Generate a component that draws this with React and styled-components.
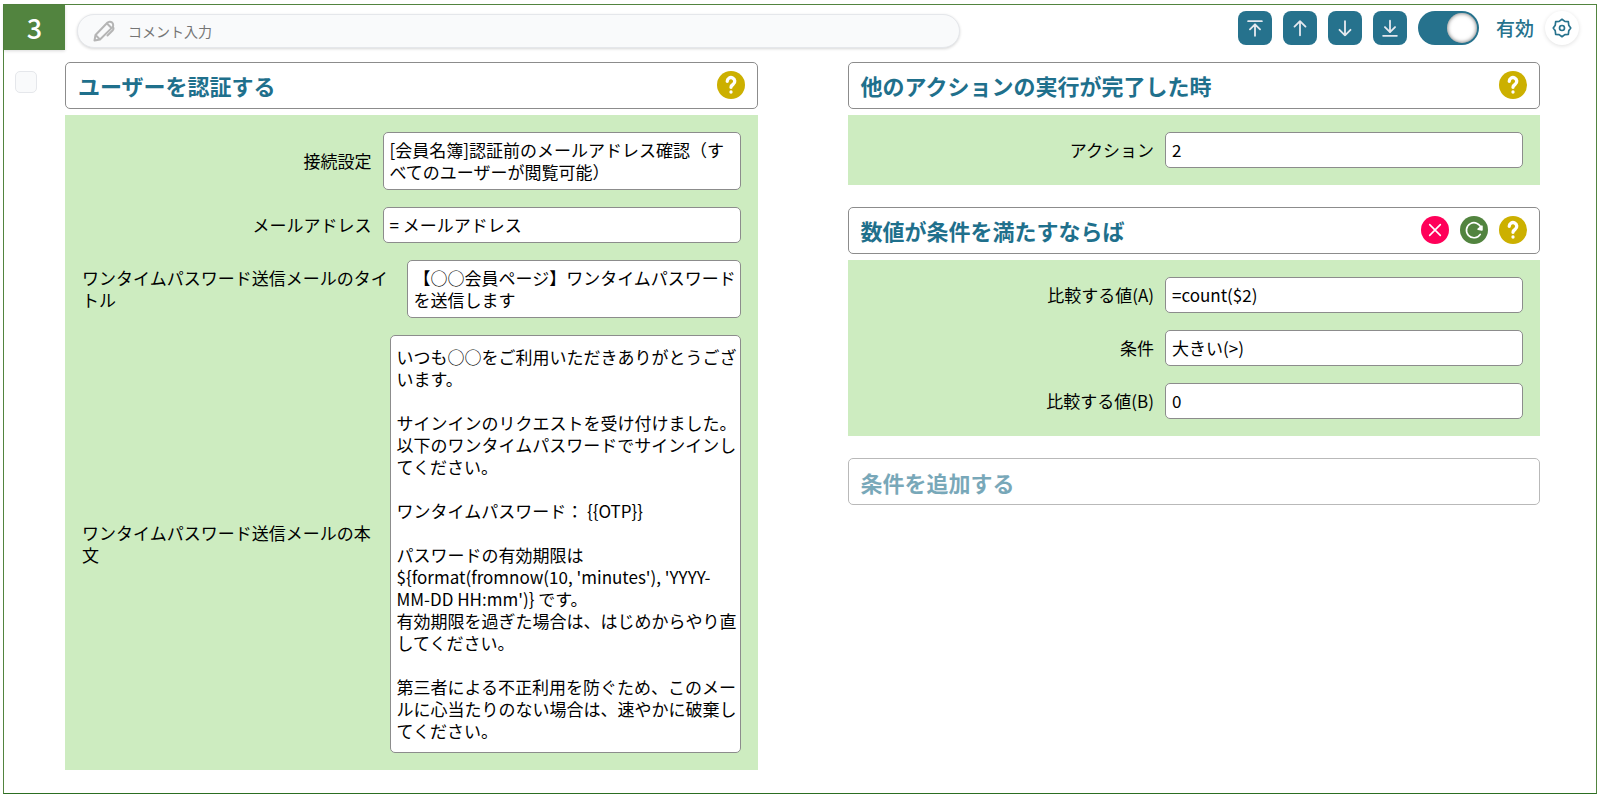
import React, { useState } from 'react';
import styled, { createGlobalStyle } from 'styled-components';

const GlobalStyle = createGlobalStyle`
  * {
    box-sizing: border-box;
  }

  body {
    margin: 0;
    background: #fff;
    color: #000;
    font-family: 'Noto Sans CJK JP', sans-serif;
    font-size: 17px;
    line-height: 22px;
  }

  button, input, textarea {
    font: inherit;
    color: inherit;
  }
`;

const Task = styled.section`
  margin: 4px 3px;
  padding-bottom: 23px;
  border: 1px solid #52843f;
  border-bottom-color: #2c6e22;
`;

const Toolbar = styled.header`
  display: flex;
  align-items: center;
  height: 45px;
  padding-right: 17px;
`;

const TaskNumber = styled.div`
  align-self: stretch;
  width: 61px;
  display: flex;
  align-items: center;
  justify-content: center;
  background: #52843f;
  color: #fff;
  font-size: 27px;
  font-weight: 500;
  box-shadow: 0 1px 3px rgba(0, 0, 0, 0.15);
`;

const Comment = styled.label`
  flex: 0 1 883px;
  height: 34px;
  margin: 6px auto 0 12px;
  padding-left: 14px;
  display: flex;
  align-items: center;
  gap: 12px;
  border: 1px solid #e5e7eb;
  border-radius: 17px;
  background: #f9fafb;
  box-shadow: 0 1px 3px rgba(0, 0, 0, 0.16);
  color: #b5b5b5;
`;

const CommentInput = styled.input`
  flex: 1;
  min-width: 0;
  padding: 0;
  border: none;
  outline: none;
  background: transparent;
  color: #333;
  font-size: 14px;

  &::placeholder {
    color: #757575;
    opacity: 1;
  }
`;

const Tools = styled.div`
  display: flex;
  align-items: center;
  gap: 11px;
`;

const MoveButton = styled.button`
  width: 34px;
  height: 34px;
  padding: 0;
  display: flex;
  align-items: center;
  justify-content: center;
  border: none;
  border-radius: 8px;
  background: #26728d;
  color: #e4e8ee;
`;

const ToggleLabel = styled.label`
  display: flex;
  align-items: center;
  gap: 17px;
  color: #26728d;
  font-size: 19px;
  font-weight: 500;
`;

const Toggle = styled.input`
  appearance: none;
  width: 61px;
  height: 34px;
  margin: 0;
  padding: 2px;
  display: flex;
  justify-content: ${({ checked }) => (checked ? 'flex-end' : 'flex-start')};
  border-radius: 17px;
  background: ${({ checked }) => (checked ? '#26728d' : '#b5b5b5')};

  &::before {
    content: '';
    width: 30px;
    height: 30px;
    border-radius: 50%;
    background: #fff;
    box-shadow: inset 0 0 4px rgba(0, 0, 0, 0.6);
  }
`;

const SettingsButton = styled.button`
  width: 34px;
  height: 34px;
  padding: 0;
  display: flex;
  align-items: center;
  justify-content: center;
  border: none;
  border-radius: 50%;
  background: #fff;
  color: #26728d;
  box-shadow: 0 1px 4px rgba(0, 0, 0, 0.12);
`;

const Body = styled.div`
  display: flex;
  align-items: flex-start;
  padding: 12px 56px 0 11px;
`;

const SelectBox = styled.input`
  appearance: none;
  flex: none;
  width: 22px;
  height: 22px;
  margin: 9px 28px 0 0;
  border: 1px solid #e5e7eb;
  border-radius: 5px;
  background: #f9fafb;
`;

const Columns = styled.div`
  flex: 1;
  display: grid;
  grid-template-columns: 1fr 1fr;
  align-items: start;
  gap: 90px;
`;

const Column = styled.div`
  display: flex;
  flex-direction: column;
  gap: 22px;
`;

const Card = styled.section`
  display: flex;
  flex-direction: column;
  gap: 6px;
`;

const CardHeader = styled.div`
  display: flex;
  align-items: center;
  gap: 11px;
  height: 47px;
  padding: 0 12px 2px;
  border: 1px solid #8c8c8c;
  border-radius: 5px;
  background: #fff;
`;

const CardTitle = styled.h2`
  flex: 1;
  margin: 0;
  color: #1f708c;
  font-size: 22px;
  font-weight: 700;
`;

const AddCard = styled.button`
  height: 47px;
  padding: 0 12px;
  border: 1px solid #8c8c8c;
  border-radius: 5px;
  background: #fff;
  color: #1f708c;
  font-size: 22px;
  font-weight: 700;
  text-align: left;
  opacity: 0.6;
`;

const RoundButton = styled.button`
  width: 28px;
  height: 28px;
  padding: 0;
  display: flex;
  align-items: center;
  justify-content: center;
  border: none;
  border-radius: 50%;
  background: ${({ $color }) => $color};
  color: #fff;
`;

const Fields = styled.div`
  display: flex;
  flex-direction: column;
  gap: 17px;
  padding: 17px;
  background: #cdecc0;
`;

const Row = styled.div`
  display: flex;
  align-items: center;
  gap: 11px;
`;

const RowLabel = styled.label`
  flex: 1;
  display: flex;
  justify-content: flex-end;
`;

const Value = styled.textarea`
  flex: 0 1 ${({ $width }) => $width}px;
  min-width: 0;
  padding: ${({ $tall }) => ($tall ? 10 : 6)}px 3px ${({ $tall }) => ($tall ? 10 : 6)}px 6px;
  border: 1px solid #8c8c8c;
  border-radius: 5px;
  background: #fff;
  resize: none;
  overflow: hidden;
  field-sizing: content;
`;

const Icon = ({ size, width = 2, children }) => (
  <svg
    width={size}
    height={size}
    viewBox="0 0 24 24"
    fill="none"
    stroke="currentColor"
    strokeWidth={width}
    strokeLinecap="round"
    strokeLinejoin="round"
    aria-hidden="true"
  >
    {children}
  </svg>
);

const PencilIcon = () => (
  <Icon size={24} width={2}>
    <path d="M2.500 21.500l1-5.500L15.300 3.800a3.200 3.200 0 0 1 5 4.600L8 20.500z" />
    <path d="M4 16.500l3.500 3.500M15 4.500l4.500 4.500M21.300 8.500c.500 1 .300 2-.500 2.800L15.500 16.500" />
  </Icon>
);

const GearIcon = () => (
  <Icon size={20} width={2}>
    <path d="M12 1.500l3.400 2.500 4.200.400.500 4.200L22.500 12l-2.400 3.400-.500 4.200-4.200.400L12 22.500 8.600 20l-4.200-.400-.500-4.200L1.500 12l2.400-3.400.500-4.200L8.600 4z" />
    <circle cx="12" cy="12" r="3" />
  </Icon>
);

const moves = [
  { label: '先頭へ移動', path: 'M4.500 4.500h15M12 20.500V8.500M6.500 13.500L12 8l5.500 5.500' },
  { label: '上へ移動', path: 'M12 20V4.500M6 10.500L12 4.500l6 6' },
  { label: '下へ移動', path: 'M12 4.500V20M6 14L12 20l6-6' },
  { label: '末尾へ移動', path: 'M4.500 20.500h15M12 4v12.500M6.500 11L12 16.500l5.500-5.500' },
];

const mailBody = `いつも○○をご利用いただきありがとうございます。

サインインのリクエストを受け付けました。
以下のワンタイムパスワードでサインインしてください。

ワンタイムパスワード： {{OTP}}

パスワードの有効期限は \${format(fromnow(10, 'minutes'), 'YYYY-MM-DD HH:mm')} です。
有効期限を過ぎた場合は、はじめからやり直してください。

第三者による不正利用を防ぐため、このメールに心当たりのない場合は、速やかに破棄してください。`;

const HelpButton = () => (
  <RoundButton $color="#ccb000" aria-label="ヘルプ">
    <Icon size={20} width={4}>
      <path d="M7.500 7.500a4.500 4.500 0 1 1 7.200 3.600c-1.700 1.100-2.700 1.900-2.700 3.700" />
      <path d="M12 20.300v.100" />
    </Icon>
  </RoundButton>
);

const Field = ({ id, label, value, width = 358, tall }) => (
  <Row>
    <RowLabel htmlFor={id}>{label}</RowLabel>
    <Value id={id} rows={1} $width={width} $tall={tall} defaultValue={value} />
  </Row>
);

const App = () => {
  const [enabled, setEnabled] = useState(true);

  return (
    <>
      <GlobalStyle />
      <Task>
        <Toolbar>
          <TaskNumber>3</TaskNumber>
          <Comment>
            <PencilIcon />
            <CommentInput placeholder="コメント入力" />
          </Comment>
          <Tools>
            {moves.map(({ label, path }) => (
              <MoveButton key={label} aria-label={label}>
                <Icon size={22} width={2}>
                  <path d={path} />
                </Icon>
              </MoveButton>
            ))}
            <ToggleLabel>
              <Toggle
                type="checkbox"
                checked={enabled}
                onChange={(e) => setEnabled(e.target.checked)}
              />
              有効
            </ToggleLabel>
            <SettingsButton aria-label="設定">
              <GearIcon />
            </SettingsButton>
          </Tools>
        </Toolbar>
        <Body>
          <SelectBox type="checkbox" aria-label="選択" />
          <Columns>
            <Card>
              <CardHeader>
                <CardTitle>ユーザーを認証する</CardTitle>
                <HelpButton />
              </CardHeader>
              <Fields>
                <Field
                  id="connection"
                  label="接続設定"
                  value="[会員名簿]認証前のメールアドレス確認（すべてのユーザーが閲覧可能）"
                />
                <Field id="address" label="メールアドレス" value="= メールアドレス" />
                <Field
                  id="title"
                  label="ワンタイムパスワード送信メールのタイトル"
                  value="【○○会員ページ】ワンタイムパスワードを送信します"
                  width={334}
                />
                <Field
                  id="body"
                  label="ワンタイムパスワード送信メールの本文"
                  value={mailBody}
                  width={351}
                  tall
                />
              </Fields>
            </Card>
            <Column>
              <Card>
                <CardHeader>
                  <CardTitle>他のアクションの実行が完了した時</CardTitle>
                  <HelpButton />
                </CardHeader>
                <Fields>
                  <Field id="action" label="アクション" value="2" />
                </Fields>
              </Card>
              <Card>
                <CardHeader>
                  <CardTitle>数値が条件を満たすならば</CardTitle>
                  <RoundButton $color="#ff0059" aria-label="削除">
                    <Icon size={16} width={2.4}>
                      <path d="M4 4l16 16M20 4L4 20" />
                    </Icon>
                  </RoundButton>
                  <RoundButton $color="#52843f" aria-label="変更">
                    <Icon size={20} width={2}>
                      <path d="M19.500 17.200a9 9 0 1 1 1.200-7" />
                      <path d="M21.500 7.500v4.500l-4.500-1z" fill="currentColor" />
                    </Icon>
                  </RoundButton>
                  <HelpButton />
                </CardHeader>
                <Fields>
                  <Field id="value-a" label="比較する値(A)" value="=count($2)" />
                  <Field id="condition" label="条件" value="大きい(>)" />
                  <Field id="value-b" label="比較する値(B)" value="0" />
                </Fields>
              </Card>
              <AddCard>条件を追加する</AddCard>
            </Column>
          </Columns>
        </Body>
      </Task>
    </>
  );
};

export default App;
